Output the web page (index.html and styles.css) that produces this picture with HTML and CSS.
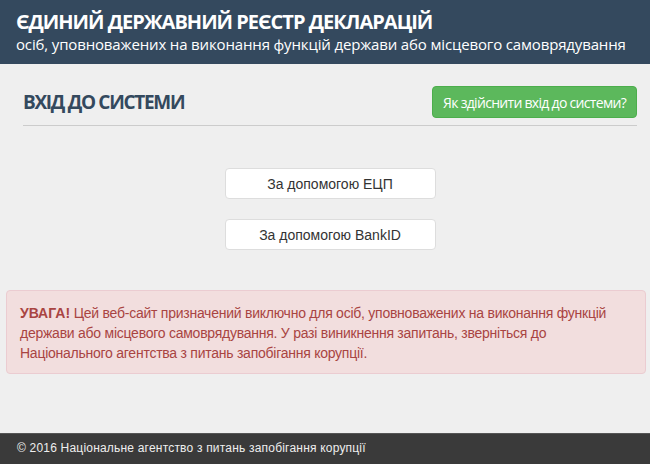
FILE: index.html
```html
<!DOCTYPE html>
<html lang="uk">
<head>
    <meta charset="UTF-8">
    <meta name="viewport" content="width=device-width, initial-scale=1.0">
    <title>Вхід до системи</title>
    <link rel="stylesheet" href="styles.css">
</head>
<body>
    <header class="site-header">
        <h1>ЄДИНИЙ ДЕРЖАВНИЙ РЕЄСТР ДЕКЛАРАЦІЙ</h1>
        <p>осіб, уповноважених на виконання функцій держави або місцевого самоврядування</p>
    </header>

    <main class="container">
        <div class="page-head">
            <h2>ВХІД ДО СИСТЕМИ</h2>
            <button class="btn btn-help">Як здійснити вхід до системи?</button>
        </div>

        <div class="login-options">
            <button class="btn btn-login">За допомогою ЕЦП</button>
            <button class="btn btn-login">За допомогою BankID</button>
        </div>
    </main>

    <div class="alert">
        <strong>УВАГА!</strong> Цей веб-сайт призначений виключно для осіб, уповноважених на виконання функцій держави або місцевого самоврядування. У разі виникнення запитань, зверніться до Національного агентства з питань запобігання корупції.
    </div>

    <footer class="site-footer">
        &copy; 2016 Національне агентство з питань запобігання корупції
    </footer>
</body>
</html>
```

FILE: styles.css
```css
html, body {
    height: 100%;
}
body {
    margin: 0;
    background-color: #efefef;
    font-family: "Liberation Sans", Arial, sans-serif;
    font-size: 14px;
    color: #333;
    display: flex;
    flex-direction: column;
}
.site-header {
    background-color: #34495e;
    color: #fff;
    padding: 9px 16px 0;
    height: 55px;
    font-family: "Open Sans", sans-serif;
}
.site-header h1 {
    margin: 0;
    font-size: 20px;
    font-weight: bold;
    line-height: 25px;
    letter-spacing: -1px;
}
.site-header p {
    margin: 0;
    font-size: 15px;
    line-height: 20px;
    letter-spacing: -0.15px;
}
.container {
    padding: 0 13px 0 23px;
}
.page-head {
    display: flex;
    justify-content: space-between;
    align-items: center;
    margin-top: 22px;
    padding-bottom: 7px;
    border-bottom: 1px solid #ccc;
}
.page-head h2 {
    margin: 0;
    font-family: "Open Sans", sans-serif;
    font-size: 19px;
    font-weight: bold;
    letter-spacing: -1.3px;
    color: #34495e;
}
.btn {
    border-radius: 4px;
    cursor: pointer;
}
.btn-help {
    height: 32px;
    padding: 0 10px;
    border: 1px solid #4cae4c;
    background-color: #5cb85c;
    color: #fff;
    font-family: "Open Sans", sans-serif;
    font-size: 14px;
    letter-spacing: -0.7px;
}
.login-options {
    display: flex;
    flex-direction: column;
    align-items: center;
    gap: 20px;
    margin-top: 42px;
}
.btn-login {
    width: 211px;
    height: 31px;
    border: 1px solid #ddd;
    background-color: #fff;
    color: #333;
    font-family: "Liberation Sans", Arial, sans-serif;
    font-size: 14px;
}
.alert {
    margin: 40px 4px 0 6px;
    padding: 12px 13px 10px;
    border: 1px solid #ebccd1;
    border-radius: 4px;
    background-color: #f2dede;
    color: #a94442;
    line-height: 20px;
    letter-spacing: -0.25px;
}
.alert strong {
    letter-spacing: 0;
}
.site-footer {
    margin-top: auto;
    height: 31px;
    line-height: 29px;
    padding: 0 17px;
    background-color: #3a3a3a;
    border-top: 1px solid #555;
    color: #eee;
    font-size: 12px;
    letter-spacing: 0.2px;
    box-sizing: border-box;
}
```
